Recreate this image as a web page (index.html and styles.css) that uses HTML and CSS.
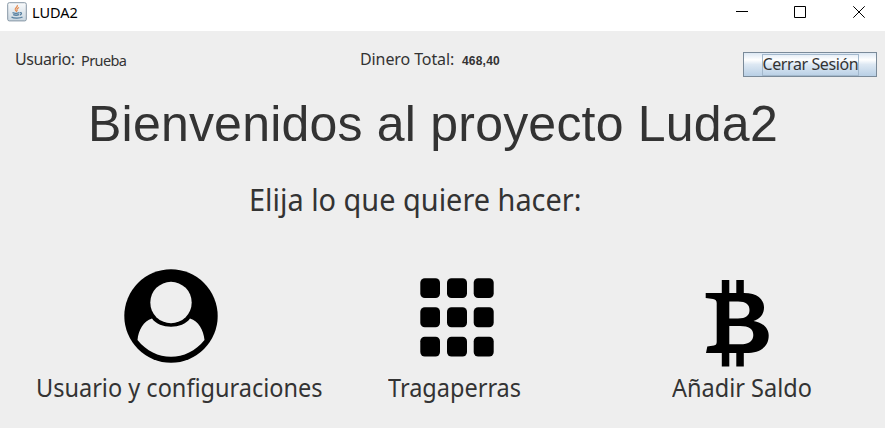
FILE: index.html
```html
<!DOCTYPE html>
<html lang="es">
<head>
<meta charset="utf-8">
<title>LUDA2</title>
<link rel="stylesheet" href="styles.css">
</head>
<body>
<header class="titlebar">
  <svg class="java" width="20" height="20" viewBox="0 0 20 20" fill="none">
    <defs><linearGradient id="tile" x1="0" y1="0" x2="0" y2="1"><stop offset="0" stop-color="#fafbfc"/><stop offset="1" stop-color="#c9d6e0"/></linearGradient></defs>
    <rect x=".7" y=".7" width="18.6" height="18.2" rx="1.6" fill="url(#tile)" stroke="#8797a5"/>
    <path d="M10.3 3c1 2-3 3-2 5l1.500 2M12 5.500c-3 1.500-2 2-1.700 3.700" stroke="#e58a4e" stroke-width="1.200"/>
    <path d="M5.500 10.700c2 .8 5 .8 7 0M6.200 12.700c2 .7 4 .7 5.800 0M13 10.700c2-.5 2 1.800-.2 2.300M4.500 15c2 1.500 9 1.300 11 0" stroke="#567f9f" stroke-width="1.300"/>
  </svg>
  <span class="caption">LUDA2</span>
  <svg class="controls" width="149" height="30" viewBox="736 0 149 30" fill="none" stroke="#000">
    <path d="M736 11.500h12M794.500 6.500h11v11h-11zM853.300 6.300l11.400 11.400M864.700 6.300l-11.400 11.400"/>
  </svg>
</header>
<main>
  <div class="status">
    <span class="tag user">Usuario:</span>
    <span class="name">Prueba</span>
    <span class="tag money">Dinero Total:</span>
    <span class="amount">468,40</span>
    <button class="logout"><span class="focus">Cerrar Sesión</span></button>
  </div>
  <h1>Bienvenidos al proyecto Luda2</h1>
  <h2>Elija lo que quiere hacer:</h2>
  <nav class="options">
    <a class="option profile">
      <svg width="96" height="104" viewBox="122.500 265 96 104">
        <circle cx="170.500" cy="316" r="46.700"/>
        <circle cx="170.500" cy="302.500" r="20.700" fill="#eee"/>
        <path fill="#eee" d="M137 340C138 330 143 321 151.500 318.500C159 329.500 182 329.500 189.500 318.500C198 321 203 330 204 340C195 351 183 356.800 170.500 356.800S146 351 137 340z"/>
      </svg>
      <span class="label">Usuario y configuraciones</span>
    </a>
    <a class="option slots">
      <svg width="76" height="104" viewBox="419 265 76 104">
        <rect x="420.300" y="278.300" width="19.700" height="19.700" rx="4.500"/><rect x="447" y="278.300" width="20" height="19.700" rx="4.500"/><rect x="473.700" y="278.300" width="20" height="19.700" rx="4.500"/>
        <rect x="420.300" y="307.300" width="19.700" height="20" rx="4.500"/><rect x="447" y="307.300" width="20" height="20" rx="4.500"/><rect x="473.700" y="307.300" width="20" height="20" rx="4.500"/>
        <rect x="420.300" y="336.800" width="19.700" height="19.700" rx="4.500"/><rect x="447" y="336.800" width="20" height="19.700" rx="4.500"/><rect x="473.700" y="336.800" width="20" height="19.700" rx="4.500"/>
      </svg>
      <span class="label">Tragaperras</span>
    </a>
    <a class="option balance">
      <svg width="68" height="104" viewBox="704 265 68 104">
        <path d="M721.800 280h7.500v14h-7.500zM736.300 280h7.500v14h-7.500zM721.800 351h7.500v15.500h-7.500zM736.300 351h7.500v15.500h-7.500z"/>
        <path fill-rule="evenodd" d="M705.700 293H744C757 293 764 299 764 307.500C764 315 759 319.500 753.500 321C763 322.500 768.700 328 768.700 335.500C768.700 347 760 353 746 353H706L707.300 346.500L714 345.500Q716.700 345 716.700 342V303Q716.700 299.500 713 299L705.700 298zM729.300 301.500V318.500H738C746 318.500 749.500 315.500 749.500 310S746 301.500 738 301.500zM729.300 326V344.300H740C749 344.300 753.300 341 753.300 335S749 326 740 326z"/>
      </svg>
      <span class="label">Añadir Saldo</span>
    </a>
  </nav>
</main>
</body>
</html>
```
FILE: styles.css
```css
* { box-sizing: border-box; }
body {
  margin: 0;
  width: 885px;
  height: 428px;
  overflow: hidden;
  background: #eee;
  color: #333;
  font-family: "Noto Sans", sans-serif;
}
.titlebar {
  display: flex;
  height: 31px;
  background: #fff;
}
.java { margin: 2px 0 0 7px; }
.caption {
  margin-left: 5px;
  font-size: 14.5px;
  line-height: 24px;
  color: #000;
}
.controls { margin-left: auto; }
.status {
  display: flex;
  height: 60px;
  padding-left: 15px;
  white-space: nowrap;
}
.tag { font-size: 16px; line-height: 22px; margin-top: 17px; }
.user { width: 66px; letter-spacing: -0.4px; }
.name {
  width: 279px;
  margin-top: 19px;
  font-size: 14.5px;
  line-height: 20px;
  letter-spacing: -0.6px;
}
.money { width: 102px; letter-spacing: -0.1px; }
.amount {
  font: bold 12px/16px "Liberation Sans", sans-serif;
  letter-spacing: 0.2px;
  margin-top: 22px;
}
.logout {
  width: 134px;
  height: 25px;
  margin: 21px 8px 0 auto;
  padding: 0;
  border: 1px solid #7a8a99;
  background: linear-gradient(#dde8f3, #fff 30%, #dde8f3 50%, #b8cfe5);
  color: #333;
  font: 16px/19px "Noto Sans", sans-serif;
}
.focus {
  display: block;
  width: 97px;
  height: 22px;
  margin: 0 auto;
  border: 1px solid #a3b8cc;
  letter-spacing: -0.4px;
}
h1 {
  margin: 4px 0 0 88px;
  font: 50px/58px "Liberation Sans", sans-serif;
  letter-spacing: 0.21px;
  white-space: nowrap;
}
h2 {
  margin: 27px 0 0 249px;
  font-size: 30px;
  font-weight: 400;
  line-height: 40px;
  white-space: nowrap;
  transform: scaleX(0.963);
  transform-origin: left;
}
.options {
  display: flex;
  margin-top: 45px;
}
.option {
  display: flex;
  flex-direction: column;
  font-size: 26px;
  line-height: 36px;
  white-space: nowrap;
}
.option svg { display: block; }
.label {
  transform: scaleX(0.904);
  transform-origin: left;
}
.profile { width: 352px; padding-left: 35.5px; }
.profile svg { margin-left: 87px; }
.slots { width: 320px; padding-left: 36px; }
.slots svg { margin-left: 31px; }
.balance svg { margin-left: 32px; }
```
